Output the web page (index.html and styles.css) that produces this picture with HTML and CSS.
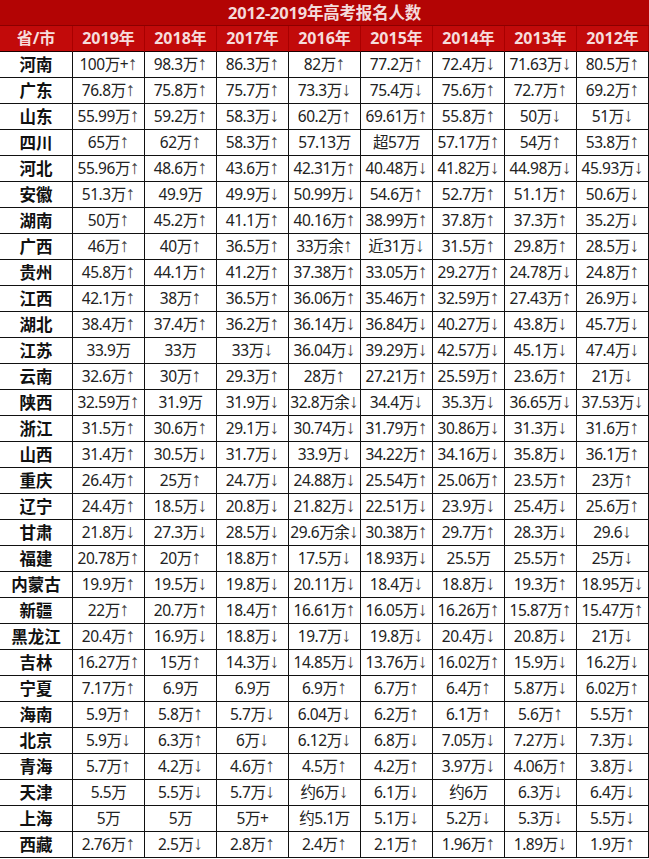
FILE: index.html
```html
<!DOCTYPE html>
<html lang="zh-CN">
<head>
<meta charset="utf-8">
<title>2012-2019年高考报名人数</title>
<link rel="stylesheet" href="styles.css">
</head>
<body>
<div class="sheet">
<div class="title">2012-2019年高考报名人数</div>
<table class="grid">
<thead>
<tr><th>省/市</th><th>2019年</th><th>2018年</th><th>2017年</th><th>2016年</th><th>2015年</th><th>2014年</th><th>2013年</th><th>2012年</th></tr>
</thead>
<tbody>
<tr><td>河南</td><td>100万+<i>↑</i></td><td>98.3万<i>↑</i></td><td>86.3万<i>↑</i></td><td>82万<i>↑</i></td><td>77.2万<i>↑</i></td><td>72.4万<i>↓</i></td><td>71.63万<i>↓</i></td><td>80.5万<i>↑</i></td></tr>
<tr><td>广东</td><td>76.8万<i>↑</i></td><td>75.8万<i>↑</i></td><td>75.7万<i>↑</i></td><td>73.3万<i>↓</i></td><td>75.4万<i>↓</i></td><td>75.6万<i>↑</i></td><td>72.7万<i>↑</i></td><td>69.2万<i>↑</i></td></tr>
<tr><td>山东</td><td>55.99万<i>↑</i></td><td>59.2万<i>↑</i></td><td>58.3万<i>↓</i></td><td>60.2万<i>↑</i></td><td>69.61万<i>↑</i></td><td>55.8万<i>↑</i></td><td>50万<i>↓</i></td><td>51万<i>↓</i></td></tr>
<tr><td>四川</td><td>65万<i>↑</i></td><td>62万<i>↑</i></td><td>58.3万<i>↑</i></td><td>57.13万</td><td>超57万</td><td>57.17万<i>↑</i></td><td>54万<i>↑</i></td><td>53.8万<i>↑</i></td></tr>
<tr><td>河北</td><td>55.96万<i>↑</i></td><td>48.6万<i>↑</i></td><td>43.6万<i>↑</i></td><td>42.31万<i>↑</i></td><td>40.48万<i>↓</i></td><td>41.82万<i>↓</i></td><td>44.98万<i>↓</i></td><td>45.93万<i>↓</i></td></tr>
<tr><td>安徽</td><td>51.3万<i>↑</i></td><td>49.9万</td><td>49.9万<i>↓</i></td><td>50.99万<i>↓</i></td><td>54.6万<i>↑</i></td><td>52.7万<i>↑</i></td><td>51.1万<i>↑</i></td><td>50.6万<i>↓</i></td></tr>
<tr><td>湖南</td><td>50万<i>↑</i></td><td>45.2万<i>↑</i></td><td>41.1万<i>↑</i></td><td>40.16万<i>↑</i></td><td>38.99万<i>↑</i></td><td>37.8万<i>↑</i></td><td>37.3万<i>↑</i></td><td>35.2万<i>↓</i></td></tr>
<tr><td>广西</td><td>46万<i>↑</i></td><td>40万<i>↑</i></td><td>36.5万<i>↑</i></td><td>33万余<i>↑</i></td><td>近31万<i>↓</i></td><td>31.5万<i>↑</i></td><td>29.8万<i>↑</i></td><td>28.5万<i>↓</i></td></tr>
<tr><td>贵州</td><td>45.8万<i>↑</i></td><td>44.1万<i>↑</i></td><td>41.2万<i>↑</i></td><td>37.38万<i>↑</i></td><td>33.05万<i>↑</i></td><td>29.27万<i>↑</i></td><td>24.78万<i>↓</i></td><td>24.8万<i>↑</i></td></tr>
<tr><td>江西</td><td>42.1万<i>↑</i></td><td>38万<i>↑</i></td><td>36.5万<i>↑</i></td><td>36.06万<i>↑</i></td><td>35.46万<i>↑</i></td><td>32.59万<i>↑</i></td><td>27.43万<i>↑</i></td><td>26.9万<i>↓</i></td></tr>
<tr><td>湖北</td><td>38.4万<i>↑</i></td><td>37.4万<i>↑</i></td><td>36.2万<i>↑</i></td><td>36.14万<i>↓</i></td><td>36.84万<i>↓</i></td><td>40.27万<i>↓</i></td><td>43.8万<i>↓</i></td><td>45.7万<i>↓</i></td></tr>
<tr><td>江苏</td><td>33.9万</td><td>33万</td><td>33万<i>↓</i></td><td>36.04万<i>↓</i></td><td>39.29万<i>↓</i></td><td>42.57万<i>↓</i></td><td>45.1万<i>↓</i></td><td>47.4万<i>↓</i></td></tr>
<tr><td>云南</td><td>32.6万<i>↑</i></td><td>30万<i>↑</i></td><td>29.3万<i>↑</i></td><td>28万<i>↑</i></td><td>27.21万<i>↑</i></td><td>25.59万<i>↑</i></td><td>23.6万<i>↑</i></td><td>21万<i>↓</i></td></tr>
<tr><td>陕西</td><td>32.59万<i>↑</i></td><td>31.9万</td><td>31.9万<i>↓</i></td><td>32.8万余<i>↓</i></td><td>34.4万<i>↓</i></td><td>35.3万<i>↓</i></td><td>36.65万<i>↓</i></td><td>37.53万<i>↓</i></td></tr>
<tr><td>浙江</td><td>31.5万<i>↑</i></td><td>30.6万<i>↑</i></td><td>29.1万<i>↓</i></td><td>30.74万<i>↓</i></td><td>31.79万<i>↑</i></td><td>30.86万<i>↓</i></td><td>31.3万<i>↓</i></td><td>31.6万<i>↑</i></td></tr>
<tr><td>山西</td><td>31.4万<i>↑</i></td><td>30.5万<i>↓</i></td><td>31.7万<i>↓</i></td><td>33.9万<i>↓</i></td><td>34.22万<i>↑</i></td><td>34.16万<i>↓</i></td><td>35.8万<i>↓</i></td><td>36.1万<i>↑</i></td></tr>
<tr><td>重庆</td><td>26.4万<i>↑</i></td><td>25万<i>↑</i></td><td>24.7万<i>↓</i></td><td>24.88万<i>↓</i></td><td>25.54万<i>↑</i></td><td>25.06万<i>↑</i></td><td>23.5万<i>↑</i></td><td>23万<i>↑</i></td></tr>
<tr><td>辽宁</td><td>24.4万<i>↑</i></td><td>18.5万<i>↓</i></td><td>20.8万<i>↓</i></td><td>21.82万<i>↓</i></td><td>22.51万<i>↓</i></td><td>23.9万<i>↓</i></td><td>25.4万<i>↓</i></td><td>25.6万<i>↑</i></td></tr>
<tr><td>甘肃</td><td>21.8万<i>↓</i></td><td>27.3万<i>↓</i></td><td>28.5万<i>↓</i></td><td>29.6万余<i>↓</i></td><td>30.38万<i>↑</i></td><td>29.7万<i>↑</i></td><td>28.3万<i>↓</i></td><td>29.6<i>↓</i></td></tr>
<tr><td>福建</td><td>20.78万<i>↑</i></td><td>20万<i>↑</i></td><td>18.8万<i>↑</i></td><td>17.5万<i>↓</i></td><td>18.93万<i>↓</i></td><td>25.5万</td><td>25.5万<i>↑</i></td><td>25万<i>↓</i></td></tr>
<tr><td>内蒙古</td><td>19.9万<i>↑</i></td><td>19.5万<i>↓</i></td><td>19.8万<i>↓</i></td><td>20.11万<i>↓</i></td><td>18.4万<i>↓</i></td><td>18.8万<i>↓</i></td><td>19.3万<i>↑</i></td><td>18.95万<i>↓</i></td></tr>
<tr><td>新疆</td><td>22万<i>↑</i></td><td>20.7万<i>↑</i></td><td>18.4万<i>↑</i></td><td>16.61万<i>↑</i></td><td>16.05万<i>↓</i></td><td>16.26万<i>↑</i></td><td>15.87万<i>↑</i></td><td>15.47万<i>↑</i></td></tr>
<tr><td>黑龙江</td><td>20.4万<i>↑</i></td><td>16.9万<i>↓</i></td><td>18.8万<i>↓</i></td><td>19.7万<i>↓</i></td><td>19.8万<i>↓</i></td><td>20.4万<i>↓</i></td><td>20.8万<i>↓</i></td><td>21万<i>↓</i></td></tr>
<tr><td>吉林</td><td>16.27万<i>↑</i></td><td>15万<i>↑</i></td><td>14.3万<i>↓</i></td><td>14.85万<i>↓</i></td><td>13.76万<i>↓</i></td><td>16.02万<i>↑</i></td><td>15.9万<i>↓</i></td><td>16.2万<i>↓</i></td></tr>
<tr><td>宁夏</td><td>7.17万<i>↑</i></td><td>6.9万</td><td>6.9万</td><td>6.9万<i>↑</i></td><td>6.7万<i>↑</i></td><td>6.4万<i>↑</i></td><td>5.87万<i>↓</i></td><td>6.02万<i>↑</i></td></tr>
<tr><td>海南</td><td>5.9万<i>↑</i></td><td>5.8万<i>↑</i></td><td>5.7万<i>↓</i></td><td>6.04万<i>↓</i></td><td>6.2万<i>↑</i></td><td>6.1万<i>↑</i></td><td>5.6万<i>↑</i></td><td>5.5万<i>↑</i></td></tr>
<tr><td>北京</td><td>5.9万<i>↓</i></td><td>6.3万<i>↑</i></td><td>6万<i>↓</i></td><td>6.12万<i>↓</i></td><td>6.8万<i>↓</i></td><td>7.05万<i>↓</i></td><td>7.27万<i>↓</i></td><td>7.3万<i>↓</i></td></tr>
<tr><td>青海</td><td>5.7万<i>↑</i></td><td>4.2万<i>↓</i></td><td>4.6万<i>↑</i></td><td>4.5万<i>↑</i></td><td>4.2万<i>↑</i></td><td>3.97万<i>↓</i></td><td>4.06万<i>↑</i></td><td>3.8万<i>↓</i></td></tr>
<tr><td>天津</td><td>5.5万</td><td>5.5万<i>↓</i></td><td>5.7万<i>↓</i></td><td>约6万<i>↓</i></td><td>6.1万<i>↓</i></td><td>约6万</td><td>6.3万<i>↓</i></td><td>6.4万<i>↓</i></td></tr>
<tr><td>上海</td><td>5万</td><td>5万</td><td>5万+</td><td>约5.1万</td><td>5.1万<i>↓</i></td><td>5.2万<i>↓</i></td><td>5.3万<i>↓</i></td><td>5.5万<i>↓</i></td></tr>
<tr><td>西藏</td><td>2.76万<i>↑</i></td><td>2.5万<i>↓</i></td><td>2.8万<i>↑</i></td><td>2.4万<i>↑</i></td><td>2.1万<i>↑</i></td><td>1.96万<i>↑</i></td><td>1.89万<i>↓</i></td><td>1.9万<i>↑</i></td></tr>
</tbody>
</table>
</div>
</body>
</html>
```

FILE: styles.css
```css
html, body {
  margin: 0;
  padding: 0;
  background: #ffffff;
}

.sheet {
  width: 649px;
  font-family: "Noto Sans", "Noto Sans CJK SC", sans-serif;
}

.title {
  height: 26px;
  box-sizing: border-box;
  background: #b30404;
  border-bottom: 1px solid #8c0000;
  color: #f4dada;
  font-weight: 700;
  font-size: 16.5px;
  line-height: 25px;
  text-align: center;
  letter-spacing: -0.2px;
}

.grid {
  width: 649px;
  table-layout: fixed;
  border-collapse: separate;
  border-spacing: 0;
}

.grid th,
.grid td {
  box-sizing: border-box;
  width: 72px;
  padding: 0;
  text-align: center;
  white-space: nowrap;
  overflow: visible;
}

.grid th:first-child,
.grid td:first-child {
  width: 73px;
}

.grid th {
  height: 26px;
  background: #c20a0a;
  color: #f6dcdc;
  font-weight: 700;
  font-size: 16px;
  line-height: 25px;
  border-right: 1px solid #a80000;
  border-bottom: 1px solid #1a0000;
}

.grid td {
  height: 26px;
  color: #222;
  font-size: 15.5px;
  line-height: 25px;
  border-right: 1px solid #111;
  border-bottom: 1px solid #111;
  letter-spacing: -0.45px;
}

.grid td:first-child {
  color: #111;
  font-weight: 700;
  font-size: 16.5px;
  letter-spacing: 0;
}

.grid td i {
  font-style: normal;
  color: #444;
  font-family: "Liberation Sans", sans-serif;
  font-size: 19px;
  line-height: 0;
  letter-spacing: 0;
}
```
